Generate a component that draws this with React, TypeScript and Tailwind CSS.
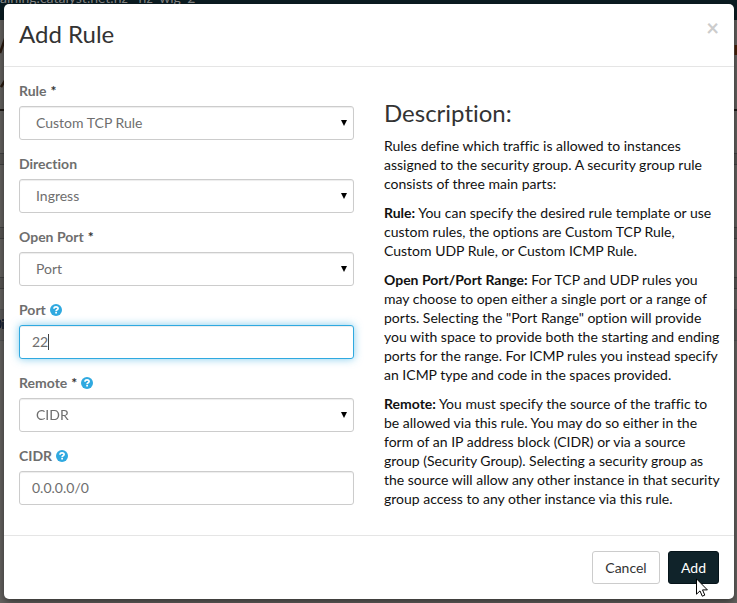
import { useState, type ReactNode } from "react";

function Help({ text }: { text: string }) {
  return (
    <svg role="img" aria-label={text} viewBox="0 0 12 12" className="ml-1 inline-block size-3 align-[-1px]">
      <circle cx="6" cy="6" r="6" fill="#2fa9e0" />
      <path d="M4 4.7C4 3.4 4.9 2.8 6 2.8s2.1.7 2.1 1.7C8.1 5.7 6.1 5.7 6.1 7" fill="none" stroke="#fff" strokeWidth="1.7" />
      <path d="M5.2 7.8h1.8v1.7H5.2z" fill="#fff" />
    </svg>
  );
}

function Field({ id, label, required, help, children }: { id: string; label: string; required?: boolean; help?: string; children: ReactNode }) {
  return (
    <div className="mb-[15px]">
      <div className="mb-[7px] h-[17px] leading-[17px]">
        <label htmlFor={id} className="font-bold text-[#6e6e6e]">{label}</label>
        {required && <span className="ml-1 font-bold text-[#333]">*</span>}
        {help && <Help text={help} />}
      </div>
      {children}
    </div>
  );
}

const control =
  "block h-[34px] w-full appearance-none rounded-[3px] border border-[#ccc] bg-white text-sm text-[#6e6e6e] shadow-[inset_0_1px_1px_rgba(0,0,0,0.075)] outline-none focus:border-[#2fa9e0] focus:shadow-[inset_0_1px_1px_rgba(0,0,0,0.075),0_0_8px_rgba(47,169,224,0.6)]";

function Choice({ id, options }: { id: string; options: string[] }) {
  return (
    <div className="relative">
      <select id={id} className={`${control} px-4`}>
        {options.map((o) => (
          <option key={o}>{o}</option>
        ))}
      </select>
      <svg viewBox="0 0 6 6" className="pointer-events-none absolute top-3.5 right-[7px] size-1.5">
        <path d="M0 0h6L3 6z" fill="#000" />
      </svg>
    </div>
  );
}

function Backdrop() {
  return (
    <div aria-hidden="true" className="absolute inset-0 -z-10 overflow-hidden bg-[#666461]">
      <div className="h-5 bg-[#0b1c22] text-sm text-[#888]">
        <p className="-translate-y-3 leading-5">aining.catalyst.net.nz · nz_wlg_2</p>
      </div>
      <div className="flex h-[91px] items-start justify-between border-b-2 border-[#1f1915]">
        <svg viewBox="0 0 6 80" className="h-20 w-1.5">
          <path d="M6 16L0 33M6 59L1 67" stroke="#2a1a10" strokeWidth="2.5" />
        </svg>
        <svg viewBox="0 0 3 80" className="h-20 w-[3px]">
          <path d="M2 25v10" stroke="#4a2108" strokeWidth="3" />
        </svg>
      </div>
      <div className="mt-[42px] h-3 border-y border-[#444] bg-[#5a5856]" />
      <div className="mt-[62px] h-3 border-y border-[#444] bg-[#5a5856]" />
      <div className="mt-[38px] h-3 border-y border-[#444] bg-[#5a5856]" />
      <div className="mt-5 h-8 border-y border-[#555] bg-[#5f5d5b]">
        <svg viewBox="0 0 4 12" className="mt-2 h-3 w-1">
          <path d="M0 2q2 4 0 8M3 4v7M3 1v2" stroke="#111a30" fill="none" strokeWidth="1.5" />
        </svg>
      </div>
    </div>
  );
}

export default function App() {
  const [port, setPort] = useState("22");
  const [cidr, setCidr] = useState("0.0.0.0/0");

  return (
    <div className="relative isolate min-h-screen pt-1 pr-[3px] pb-1 pl-1 font-['Lato',sans-serif] text-sm leading-[19px] text-[#111] [font-variant-ligatures:none]">
      <Backdrop />
      <div role="dialog" aria-labelledby="title" className="rounded-[5px] bg-white shadow-[0_3px_9px_rgba(0,0,0,0.5)]">
        <header className="flex items-start justify-between border-b border-[#e5e5e5] px-[15px] pt-[15px] pb-[17px]">
          <h1 id="title" className="text-2xl leading-[30px] text-[#333]">Add Rule</h1>
          <button type="button" aria-label="Close" className="text-[22px] leading-[17px] font-bold text-[#ccc]">×</button>
        </header>
        <form onSubmit={(e) => e.preventDefault()}>
          <div className="grid grid-cols-2 gap-[30px] p-[15px]">
            <div>
              <Field id="rule" label="Rule" required>
                <Choice id="rule" options={["Custom TCP Rule", "Custom UDP Rule", "Custom ICMP Rule"]} />
              </Field>
              <Field id="direction" label="Direction">
                <Choice id="direction" options={["Ingress", "Egress"]} />
              </Field>
              <Field id="open-port" label="Open Port" required>
                <Choice id="open-port" options={["Port", "Port Range"]} />
              </Field>
              <Field id="port" label="Port" help="Port help">
                <div className="relative">
                  <input id="port" autoFocus value={port} onChange={(e) => setPort(e.target.value)} className={`${control} px-3 pb-0.5 caret-transparent`} />
                  <span className="pointer-events-none absolute top-[9px] left-[29px] h-4 w-px bg-[#444]" />
                </div>
              </Field>
              <Field id="remote" label="Remote" required help="Remote help">
                <Choice id="remote" options={["CIDR", "Security Group"]} />
              </Field>
              <Field id="cidr" label="CIDR" help="CIDR help">
                <input id="cidr" value={cidr} onChange={(e) => setCidr(e.target.value)} className={`${control} px-3 pb-0.5`} />
              </Field>
            </div>
            <div className="-mr-1">
              <h2 className="mt-[18px] mb-2.5 text-2xl leading-[26px] text-[#333]">Description:</h2>
              <div className="space-y-2.5">
                <p>Rules define which traffic is allowed to instances assigned to the security group. A security group rule consists of three main parts:</p>
                <p><b>Rule:</b> You can specify the desired rule template or use custom rules, the options are Custom TCP Rule, Custom UDP Rule, or Custom ICMP Rule.</p>
                <p><b>Open Port/Port Range:</b> For TCP and UDP rules you may choose to open either a single port or a range of ports. Selecting the "Port Range" option will provide you with space to provide both the starting and ending ports for the range. For ICMP rules you instead specify an ICMP type and code in the spaces provided.</p>
                <p><b>Remote:</b> You must specify the source of the traffic to be allowed via this rule. You may do so either in the form of an IP address block (CIDR) or via a source group (Security Group). Selecting a security group as the source will allow any other instance in that security group access to any other instance via this rule.</p>
              </div>
            </div>
          </div>
          <footer className="flex justify-end gap-2 border-t border-[#e5e5e5] p-[15px]">
            <button type="button" className="h-[33px] min-w-[68px] rounded-[3px] border border-[#ccc] bg-white px-3 text-[#333]">Cancel</button>
            <button type="submit" className="relative h-[33px] rounded-[3px] border border-[#06141a] bg-[#10232a] px-3 text-white">
              Add
              <svg aria-hidden="true" viewBox="0 0 12 19" className="absolute top-[26px] left-[27px] h-[19px] w-3">
                <path d="M.5.8v15.4l3.5-3.3 2.3 5.3 2.5-1.1-2.3-5.2h4.9z" fill="#fff" stroke="#000" />
              </svg>
            </button>
          </footer>
        </form>
      </div>
    </div>
  );
}
